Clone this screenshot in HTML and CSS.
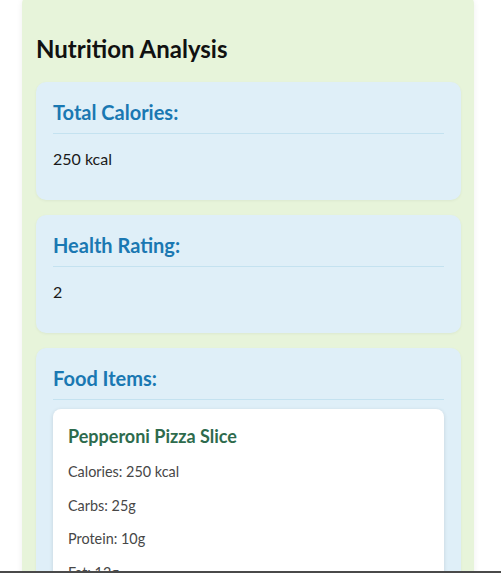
FILE: index.html
```html
<!DOCTYPE html>
<html>
<head>
<meta charset="utf-8">
<title>Nutrition Analysis</title>
<link rel="stylesheet" href="styles.css">
</head>
<body>
<div class="panel">
  <h2 class="title">Nutrition Analysis</h2>
  <section class="card">
    <h3 class="card-head">Total Calories:</h3>
    <p class="card-value">250 kcal</p>
  </section>
  <section class="card">
    <h3 class="card-head">Health Rating:</h3>
    <p class="card-value">2</p>
  </section>
  <section class="card">
    <h3 class="card-head">Food Items:</h3>
    <div class="food">
      <h4 class="food-name">Pepperoni Pizza Slice</h4>
      <p class="food-stat">Calories: 250 kcal</p>
      <p class="food-stat">Carbs: 25g</p>
      <p class="food-stat">Protein: 10g</p>
      <p class="food-stat">Fat: 12g</p>
    </div>
  </section>
</div>
<div class="frame-edge"></div>
</body>
</html>
```
FILE: styles.css
```css
html, body {
  margin: 0;
  padding: 0;
  background: #ffffff;
  overflow: hidden;
}
body {
  font-family: Lato, "Noto Sans", sans-serif;
  color: #1a1a1a;
}
.panel {
  box-sizing: border-box;
  width: 452px;
  margin: -6px 0 0 22px;
  padding: 39px 13px 30px 14px;
  background: #e7f4da;
  border-radius: 10px;
  box-shadow: 0 2px 6px rgba(0, 0, 0, 0.07);
}
.title {
  margin: 0 0 17px 0;
  font-size: 24px;
  line-height: 32px;
  font-weight: 700;
  color: #111111;
}
.card {
  background: #dfeff8;
  border-radius: 10px;
  padding: 16px 17px 30px 17px;
  margin-bottom: 15px;
  box-shadow: 0 1px 3px rgba(0, 0, 0, 0.05);
}
.card-head {
  margin: 0;
  padding-bottom: 7px;
  border-bottom: 1px solid #c4e2f0;
  font-size: 20px;
  line-height: 28px;
  font-weight: 700;
  color: #1a78b2;
}
.card-value {
  margin: 14px 0 0 0;
  font-size: 16px;
  line-height: 22px;
  color: #1a1a1a;
}
.food {
  margin-top: 9px;
  background: #ffffff;
  border-radius: 8px;
  padding: 15px 15px 10px 15px;
  box-shadow: 0 1px 4px rgba(0, 0, 0, 0.12);
}
.food-name {
  margin: 0 0 14px 0;
  font-size: 18px;
  line-height: 24px;
  font-weight: 700;
  color: #2e6b4d;
}
.food-stat {
  margin: 14.4px 0;
  font-size: 14.4px;
  line-height: 19.2px;
  color: #474747;
}
.food-name + .food-stat {
  margin-top: 0;
}
.frame-edge {
  position: fixed;
  left: 0;
  right: 0;
  bottom: 0;
  height: 2px;
  background: #4a4a4a;
}
```
